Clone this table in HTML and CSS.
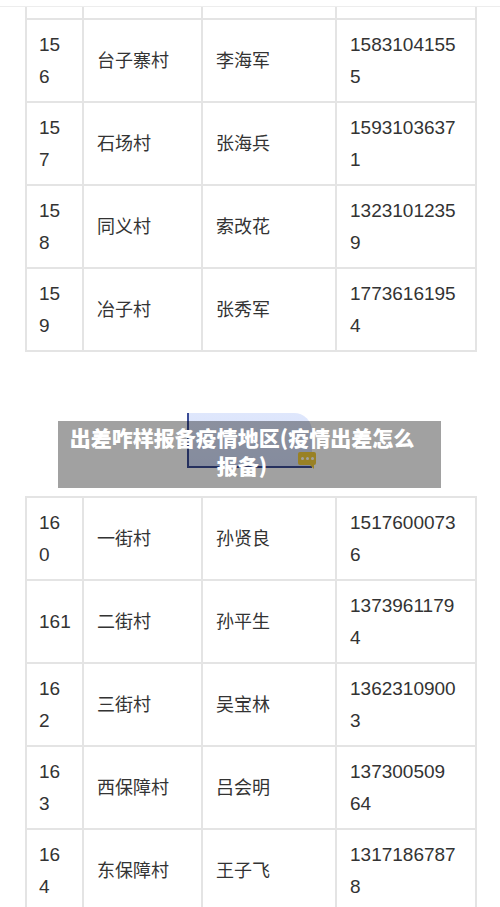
FILE: index.html
```html
<!DOCTYPE html>
<html lang="zh-CN">
<head>
    <meta charset="UTF-8">
    <meta name="viewport" content="width=device-width, initial-scale=1.0">
    <title>出差咋样报备疫情地区</title>
    <link rel="stylesheet" href="styles.css">
</head>
<body>

<div class="shot">
    <table class="grid">
        <colgroup>
            <col class="c-no"><col class="c-village"><col class="c-name"><col class="c-phone">
        </colgroup>
        <tr class="cut">
            <td></td><td></td><td></td><td></td>
        </tr>
        <tr>
            <td class="no">15<br>6</td>
            <td>台子寨村</td>
            <td>李海军</td>
            <td class="phone">1583104155<br>5</td>
        </tr>
        <tr>
            <td class="no">15<br>7</td>
            <td>石场村</td>
            <td>张海兵</td>
            <td class="phone">1593103637<br>1</td>
        </tr>
        <tr>
            <td class="no">15<br>8</td>
            <td>同义村</td>
            <td>索改花</td>
            <td class="phone">1323101235<br>9</td>
        </tr>
        <tr>
            <td class="no">15<br>9</td>
            <td>冶子村</td>
            <td>张秀军</td>
            <td class="phone">1773616195<br>4</td>
        </tr>
    </table>
</div>

<div class="figure">
    <div class="pic">
        <span class="bubble"><i></i><i></i><i></i></span>
    </div>
    <div class="caption">出差咋样报备疫情地区(疫情出差怎么报备)</div>
</div>

<div class="shot-2">
    <table class="grid">
        <colgroup>
            <col class="c-no"><col class="c-village"><col class="c-name"><col class="c-phone">
        </colgroup>
        <tr>
            <td class="no">16<br>0</td>
            <td>一街村</td>
            <td>孙贤良</td>
            <td class="phone">1517600073<br>6</td>
        </tr>
        <tr>
            <td class="no">161</td>
            <td>二街村</td>
            <td>孙平生</td>
            <td class="phone">1373961179<br>4</td>
        </tr>
        <tr>
            <td class="no">16<br>2</td>
            <td>三街村</td>
            <td>吴宝林</td>
            <td class="phone">1362310900<br>3</td>
        </tr>
        <tr>
            <td class="no">16<br>3</td>
            <td>西保障村</td>
            <td>吕会明</td>
            <td class="phone">137300509<br>64</td>
        </tr>
        <tr>
            <td class="no">16<br>4</td>
            <td>东保障村</td>
            <td>王子飞</td>
            <td class="phone">1317186787<br>8</td>
        </tr>
    </table>
</div>

</body>
</html>
```

FILE: styles.css
```css
* {
    box-sizing: border-box;
}

body {
    margin: 0;
    background-color: #fff;
    color: #333;
    font-family: "Liberation Sans", "Noto Sans CJK SC", sans-serif;
    overflow: hidden;
}

.shot {
    margin-top: 6px;
    border-top: 1px solid #ededed;
}

.grid {
    border-collapse: collapse;
    table-layout: fixed;
    width: 450px;
    margin-left: 25px;
}

.c-no { width: 57px; }
.c-village { width: 119px; }
.c-name { width: 134px; }
.c-phone { width: 140px; }

.grid tr {
    height: 83px;
}

.grid td {
    border: 2px solid #e4e4e4;
    padding: 0 0 0 13px;
    vertical-align: middle;
    font-size: 18px;
    line-height: 32px;
    white-space: nowrap;
}

.grid .cut {
    height: 12px;
}

.grid .cut td {
    border-top: none;
}

.grid td.no {
    padding-left: 12px;
    font-size: 19px;
}

.grid td.phone {
    font-size: 19px;
}

/* picture with the title bar over it */
.figure {
    position: relative;
    height: 144px;
    padding-top: 61px;
}

.pic {
    position: relative;
    margin-left: 187px;
    width: 125px;
    height: 55px;
    background: linear-gradient(180deg, #dfe7fc, #d2ddfa);
    border-left: 2px solid #3b4d96;
    border-bottom: 2px solid #3b4d96;
    border-top-right-radius: 18px;
}

.bubble {
    position: absolute;
    left: 109px;
    top: 39px;
    width: 18px;
    height: 13px;
    border-radius: 2px;
    background-color: #f2cc3c;
    display: flex;
    justify-content: center;
    align-items: center;
    gap: 2px;
}

.bubble::after {
    content: "";
    position: absolute;
    right: 2px;
    bottom: -4px;
    border-top: 4px solid #f2cc3c;
    border-left: 4px solid transparent;
}

.bubble i {
    width: 3px;
    height: 3px;
    border-radius: 50%;
    background-color: #fff;
}

.caption {
    position: absolute;
    left: 58px;
    top: 69px;
    width: 383px;
    height: 67px;
    padding: 2px 22px 0 7px;
    background-color: rgba(0, 0, 0, 0.37);
    color: #fff;
    font-family: "Noto Sans CJK SC", sans-serif;
    font-weight: 900;
    font-size: 21px;
    line-height: 28px;
    text-align: center;
}
```
